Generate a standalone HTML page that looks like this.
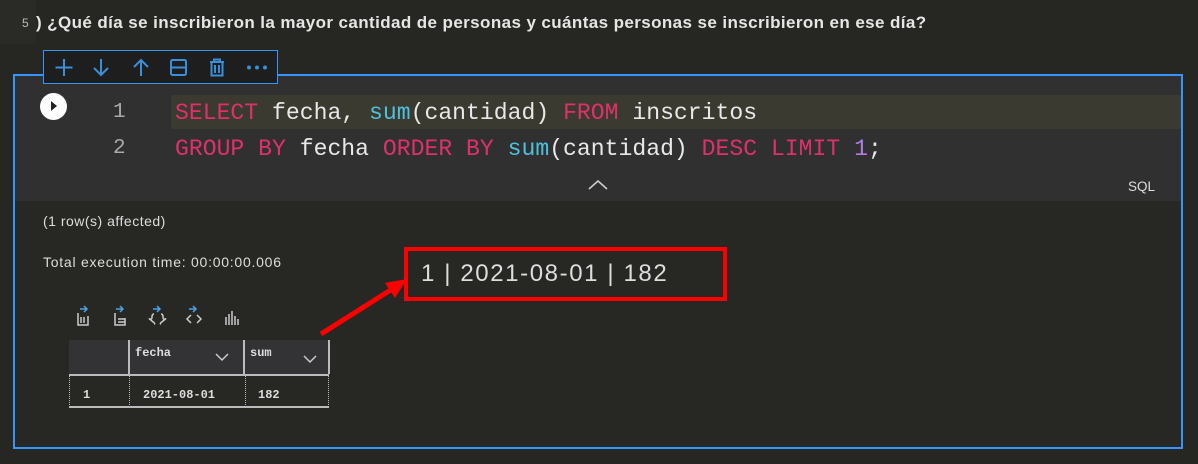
<!DOCTYPE html>
<html><head><meta charset="utf-8"><style>
*{margin:0;padding:0;box-sizing:border-box}
body{width:1198px;height:464px;background:#262622;position:relative;overflow:hidden;font-family:"Liberation Sans",sans-serif;color:#ddd}
.abs{position:absolute;white-space:nowrap}
.mono{font-family:"Liberation Mono",monospace}
.k{color:#e0306a}.f{color:#4fc1dc}.n{color:#b07de8}
</style></head><body>
<div class="abs" style="left:0;top:0;width:36px;height:44px;background:#2a2a27"></div>
<div class="abs" style="left:22px;top:16px;font-size:12px;color:#bbb">5</div>
<div class="abs" style="left:36px;top:13px;font-size:17px;font-weight:bold;color:#e6e6e6;letter-spacing:0.4px">) ¿Qué día se inscribieron la mayor cantidad de personas y cuántas personas se inscribieron en ese día?</div>

<div class="abs" style="left:13px;top:74px;width:1170px;height:375px;border:2px solid #3794ff;background:#272723"></div>
<div class="abs" style="left:15px;top:76px;width:1166px;height:125px;background:#303031"></div>
<div class="abs" style="left:171px;top:95px;width:1010px;height:34px;background:#3b3a31"></div>

<div class="abs" style="left:43px;top:50px;width:235px;height:34px;border:1.5px solid #3794ff;background:#1e1e1e"></div>
<svg class="abs" style="left:43px;top:50px" width="235" height="34" fill="none" stroke="#3a8fd8" stroke-width="2">
<path d="M21 9v17M12.5 17.5h17"/>
<path d="M58 9v16M51 18l7 7 7-7"/>
<path d="M98 26V10M91 17l7-7 7 7"/>
<rect x="128" y="10" width="15" height="15" rx="1.5"/><path d="M128 17.5h15"/>
<path d="M167 12h14M171 12v-2.5h6V12M168.5 12v13.5h11V12M172 15v8M176 15v8"/>
<circle cx="206" cy="17.5" r="1" fill="#3a8fd8"/><circle cx="214" cy="17.5" r="1" fill="#3a8fd8"/><circle cx="222" cy="17.5" r="1" fill="#3a8fd8"/>
</svg>

<div class="abs" style="left:40px;top:93px;width:27px;height:27px;border-radius:50%;background:#fff"></div>
<div class="abs" style="left:51px;top:101px;width:0;height:0;border-left:6px solid #222;border-top:5px solid transparent;border-bottom:5px solid transparent"></div>

<div class="abs mono" style="left:113px;top:101px;font-size:21px;color:#aaa">1</div>
<div class="abs mono" style="left:113px;top:137px;font-size:21px;color:#aaa">2</div>
<div class="abs mono" style="left:175px;top:100px;font-size:23.1px;color:#e8e8e8"><span class="k">SELECT</span> fecha, <span class="f">sum</span>(cantidad) <span class="k">FROM</span> inscritos</div>
<div class="abs mono" style="left:175px;top:136px;font-size:23.1px;color:#e8e8e8"><span class="k">GROUP BY</span> fecha <span class="k">ORDER BY</span> <span class="f">sum</span>(cantidad) <span class="k">DESC LIMIT</span> <span class="n">1</span>;</div>
<svg class="abs" style="left:586px;top:178px" width="24" height="14" fill="none" stroke="#ccc" stroke-width="1.6"><path d="M3 11l9-8 9 8"/></svg>
<div class="abs" style="left:1128px;top:179px;font-size:13.5px;color:#ddd">SQL</div>

<div class="abs" style="left:43px;top:213px;font-size:14px;letter-spacing:0.5px;color:#ddd">(1 row(s) affected)</div>
<div class="abs" style="left:43px;top:254px;font-size:14px;letter-spacing:0.75px;color:#ddd">Total execution time: 00:00:00.006</div>

<div class="abs" style="left:404px;top:247px;width:323px;height:54px;border:4px solid #f00"></div>
<div class="abs" style="left:421px;top:260px;font-size:24px;letter-spacing:1.6px;color:#ddd">1 | 2021-08-01 | 182</div>
<svg class="abs" style="left:315px;top:270px" width="100" height="70"><path d="M6 64L82 16" stroke="#f00" stroke-width="5"/><path d="M92 9L70 13l10 15z" fill="#f00"/></svg>

<svg class="abs" style="left:74px;top:305px" width="175" height="22" fill="none" stroke="#ccc" stroke-width="1.5">
<path d="M4 8v12h10V11M7 12v6M10 12v6" /><path d="M6 4h7M10 1l3 3-3 3" stroke="#4aa3e8"/>
<path d="M41 8v12h10v-7M44 14h7M44 17h7" /><path d="M42 4h7M46 1l3 3-3 3" stroke="#4aa3e8"/>
<path d="M80 9q-2 0-2 3t-2 2 2 2 2 3M87 9q2 0 2 3t2 2-2 2-2 3"/><path d="M79 4h7M83 1l3 3-3 3" stroke="#4aa3e8"/>
<path d="M117 10l-4 4 4 4M123 10l4 4-4 4"/><path d="M115 4h7M119 1l3 3-3 3" stroke="#4aa3e8"/>
<path d="M152 12v8M155 9v11M158 6v14M161 11v9M164 14v6"/>
</svg>

<div class="abs" style="left:69px;top:340px;width:260px;height:34px;background:#333335"></div>
<div class="abs" style="left:128px;top:340px;width:1.5px;height:34px;background:#bbb"></div>
<div class="abs" style="left:243px;top:340px;width:1.5px;height:34px;background:#bbb"></div>
<div class="abs" style="left:328px;top:340px;width:1.5px;height:34px;background:#bbb"></div>
<div class="abs" style="left:69px;top:374px;width:260px;height:1.5px;background:#bbb"></div>
<div class="abs" style="left:69px;top:406px;width:260px;height:1.5px;background:#bbb"></div>
<div class="abs" style="left:69px;top:375px;width:0;height:32px;border-left:1px dotted #bbb"></div>
<div class="abs" style="left:129px;top:375px;width:0;height:32px;border-left:1px dotted #bbb"></div>
<div class="abs" style="left:245px;top:375px;width:0;height:32px;border-left:1px dotted #bbb"></div>
<div class="abs" style="left:328px;top:375px;width:0;height:32px;border-left:1px dotted #bbb"></div>
<div class="abs mono" style="left:135px;top:346px;font-size:12px;font-weight:bold;color:#ddd">fecha</div>
<div class="abs mono" style="left:250px;top:346px;font-size:12px;font-weight:bold;color:#ddd">sum</div>
<svg class="abs" style="left:214px;top:352px" width="16" height="10" fill="none" stroke="#ccc" stroke-width="1.5"><path d="M2 2l6 6 6-6"/></svg>
<svg class="abs" style="left:302px;top:354px" width="16" height="10" fill="none" stroke="#ccc" stroke-width="1.5"><path d="M2 2l6 6 6-6"/></svg>
<div class="abs mono" style="left:83px;top:388px;font-size:12px;font-weight:bold;color:#ddd">1</div>
<div class="abs mono" style="left:143px;top:388px;font-size:12px;font-weight:bold;color:#ddd">2021-08-01</div>
<div class="abs mono" style="left:258px;top:388px;font-size:12px;font-weight:bold;color:#ddd">182</div>
</body></html>
